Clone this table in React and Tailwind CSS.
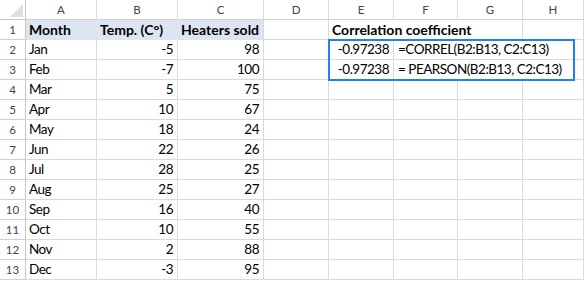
import React from "react";

const rows = [
  ["Jan", -5, 98],
  ["Feb", -7, 100],
  ["Mar", 5, 75],
  ["Apr", 10, 67],
  ["May", 18, 24],
  ["Jun", 22, 26],
  ["Jul", 28, 25],
  ["Aug", 25, 27],
  ["Sep", 16, 40],
  ["Oct", 10, 55],
  ["Nov", 2, 88],
  ["Dec", -3, 95],
];

const formulas = {
  2: "=CORREL(B2:B13, C2:C13)",
  3: "= PEARSON(B2:B13, C2:C13)",
};

const cols = ["A", "B", "C", "D", "E", "F", "G", "H"];

function Cell({ children, className = "" }) {
  return (
    <div
      className={
        "h-[20px] border-r border-b border-[#dadada] leading-[19px] whitespace-nowrap overflow-visible " +
        className
      }
    >
      {children}
    </div>
  );
}

function RowHead({ n }) {
  return (
    <div className="h-[20px] border-r border-b border-[#d0d0d0] border-r-[#c6c6c6] text-center text-[11.5px] leading-[20px] text-[#444]">
      {n}
    </div>
  );
}

// regular cell text: Lato runs wider than Calibri, so tighten it a bit
const reg = "text-[13.5px] tracking-[-0.5px]";

export default function App() {
  return (
    <div
      className="relative w-[585px] h-[281px] bg-white text-black overflow-hidden"
      style={{ fontFamily: "Lato, 'Liberation Sans', sans-serif" }}
    >
      <div className="grid grid-cols-[26px_71px_81px_86px_65px_65px_64px_65px_61px] text-[14px]">
        {/* column headers */}
        <div className="relative h-[20px] border-r border-b border-[#c6c6c6]">
          <svg className="absolute left-0 top-0" width="25" height="19">
            <polygon points="10,17 23,17 23,4" fill="#dfdfdf" />
          </svg>
        </div>
        {cols.map((c) => (
          <div
            key={c}
            className="h-[20px] border-r border-b border-[#d0d0d0] border-r-[#dadada] text-center text-[11.5px] leading-[19px] text-[#444]"
          >
            {c}
          </div>
        ))}

        {/* row 1 */}
        <RowHead n={1} />
        <Cell className="bg-[#dde5f2] border-r-[#dde5f2] border-b-[#dde5f2] pl-[3px] font-bold">Month</Cell>
        <Cell className="bg-[#dde5f2] border-r-[#dde5f2] border-b-[#dde5f2] pl-[3px] font-bold">Temp. (C°)</Cell>
        <Cell className="bg-[#dde5f2] border-b-[#dde5f2] pl-[3px] font-bold">Heaters sold</Cell>
        <Cell />
        <Cell className="col-span-3 pl-[3px] font-bold">Correlation coefficient</Cell>
        <Cell />

        {rows.map(([m, t, h], i) => {
          const r = i + 2;
          const f = formulas[r];
          return (
            <React.Fragment key={m}>
              <RowHead n={r} />
              <Cell className={"pl-[3px] " + reg}>{m}</Cell>
              <Cell className={"text-right pr-[4px] " + reg}>{t}</Cell>
              <Cell className={"text-right pr-[4px] " + reg}>{h}</Cell>
              <Cell />
              {f ? (
                <>
                  <Cell className={"text-right pr-[4px] " + reg}>-0.97238</Cell>
                  <Cell className={"col-span-3 pl-[4px] " + reg}>{f}</Cell>
                </>
              ) : (
                <>
                  <Cell />
                  <Cell />
                  <Cell />
                  <Cell />
                </>
              )}
            </React.Fragment>
          );
        })}
      </div>

      {/* selection outline */}
      <div className="absolute left-[328px] top-[39px] w-[247px] h-[42px] border-2 border-[#1e83ee]" />
    </div>
  );
}
